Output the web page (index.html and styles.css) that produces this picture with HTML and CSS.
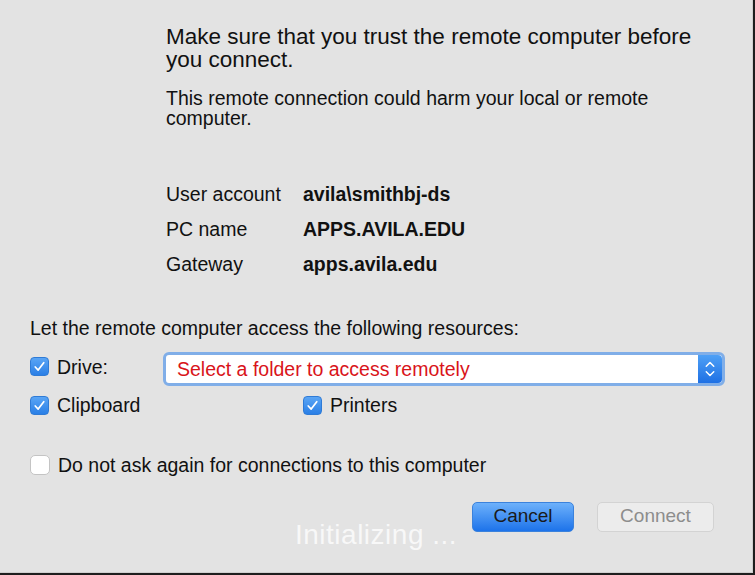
FILE: index.html
```html
<!DOCTYPE html>
<html>
<head>
<meta charset="utf-8">
<link rel="stylesheet" href="styles.css">
</head>
<body>
<div class="dialog">
  <div class="top">
    <p class="headline">Make sure that you trust the remote computer before you connect.</p>
    <p class="warning">This remote connection could harm your local or remote computer.</p>
    <div class="info">
      <span class="label">User account</span><span class="value">avila\smithbj-ds</span>
      <span class="label">PC name</span><span class="value">APPS.AVILA.EDU</span>
      <span class="label">Gateway</span><span class="value">apps.avila.edu</span>
    </div>
  </div>
  <div class="resources">
    <p class="res-title">Let the remote computer access the following resources:</p>
    <div class="drive-row">
      <label class="check"><span class="box on"><svg viewBox="0 0 18 18"><path d="M4.5 9.5 L7.6 12.8 L13.5 5" fill="none" stroke="#fff" stroke-width="1.8" stroke-linecap="round" stroke-linejoin="round"/></svg></span>Drive:</label>
      <div class="popup">
        <span class="popup-text">Select a folder to access remotely</span>
        <span class="stepper"><svg viewBox="0 0 22 30"><path d="M7 12 L11 8 L15 12 M7 18 L11 22 L15 18" fill="none" stroke="#fff" stroke-width="1.6" stroke-linecap="round" stroke-linejoin="round"/></svg></span>
      </div>
    </div>
    <div class="pair-row">
      <label class="check"><span class="box on"><svg viewBox="0 0 18 18"><path d="M4.5 9.5 L7.6 12.8 L13.5 5" fill="none" stroke="#fff" stroke-width="1.8" stroke-linecap="round" stroke-linejoin="round"/></svg></span>Clipboard</label>
      <label class="check"><span class="box on"><svg viewBox="0 0 18 18"><path d="M4.5 9.5 L7.6 12.8 L13.5 5" fill="none" stroke="#fff" stroke-width="1.8" stroke-linecap="round" stroke-linejoin="round"/></svg></span>Printers</label>
    </div>
    <label class="check ask"><span class="box off"></span>Do not ask again for connections to this computer</label>
  </div>
  <div class="footer">
    <span class="status">Initializing ...</span>
    <button class="btn primary">Cancel</button>
    <button class="btn disabled">Connect</button>
  </div>
</div>
</body>
</html>
```
FILE: styles.css
```css
html, body {
  margin: 0;
  padding: 0;
  width: 755px;
  height: 575px;
  overflow: hidden;
  background: #1e1e1e;
}
.dialog {
  box-sizing: border-box;
  width: 753px;
  height: 573px;
  background: #e3e3e3;
  border-bottom: 1px solid #cfcfcf;
  border-right: 1px solid #cfcfcf;
  font-family: "Liberation Sans", Arial, sans-serif;
  color: #111;
  display: flex;
  flex-direction: column;
}
p { margin: 0; }
.top {
  padding: 25px 40px 0 166px;
}
.headline {
  font-size: 22.5px;
  line-height: 23px;
  width: 545px;
}
.warning {
  margin-top: 17px;
  font-size: 19.5px;
  line-height: 20px;
  width: 505px;
}
.info {
  margin-top: 56px;
  display: grid;
  grid-template-columns: 137px auto;
  row-gap: 15px;
  font-size: 19.5px;
  line-height: 20px;
}
.value { font-weight: bold; }
.resources {
  padding: 44px 0 0 30px;
  font-size: 19.5px;
}
.res-title { line-height: 20px; }
.check {
  display: flex;
  align-items: center;
  gap: 8px;
  line-height: 20px;
}
.box {
  box-sizing: border-box;
  width: 19px;
  height: 19px;
  border-radius: 4px;
  display: inline-block;
  flex: none;
}
.box svg { width: 17px; height: 17px; display: block; }
.box.on {
  background: linear-gradient(#5aa5f5, #2a7fe6);
  border: 1px solid #2f7bd6;
}
.box.off {
  width: 20px;
  height: 20px;
  background: #fff;
  border: 1px solid #c4c4c4;
  border-radius: 5px;
}
.drive-row {
  margin-top: 14px;
  display: flex;
  align-items: center;
}
.drive-row .check { width: 133px; margin-top: -5px; }
.popup {
  box-sizing: border-box;
  width: 562px;
  height: 34px;
  border: 3px solid #80aee8;
  border-radius: 6px;
  background: #fff;
  display: flex;
  align-items: center;
  justify-content: space-between;
  padding-left: 11px;
}
.popup-text {
  color: #d9141a;
  font-size: 19.5px;
}
.stepper {
  width: 24px;
  height: 28px;
  background: linear-gradient(#4ea0f6, #1e70e4);
  border-radius: 0 4px 4px 0;
  display: flex;
  align-items: center;
  justify-content: center;
}
.stepper svg { width: 22px; height: 28px; display: block; }
.pair-row {
  margin-top: 9px;
  display: flex;
}
.pair-row .check:first-child { width: 273px; }
.ask {
  margin-top: 40px;
}
.footer {
  position: relative;
  display: flex;
  justify-content: flex-end;
  gap: 23px;
  padding: 27px 38px 0 0;
}
.btn {
  box-sizing: border-box;
  height: 30px;
  font-family: "Liberation Sans", Arial, sans-serif;
  font-size: 19px;
  border-radius: 5px;
  padding: 0 0 2px;
}
.primary {
  width: 102px;
  color: #1a1a1a;
  background: linear-gradient(#6db1fb, #1d73ea);
  border: 1px solid #3b82dc;
}
.disabled {
  width: 117px;
  color: #8d8d8d;
  background: #ececec;
  border: 1px solid #d3d3d3;
}
.status {
  position: absolute;
  left: 295px;
  top: 46px;
  font-size: 28px;
  line-height: 28px;
  letter-spacing: 0.5px;
  color: rgba(255, 255, 255, 0.75);
}
```
